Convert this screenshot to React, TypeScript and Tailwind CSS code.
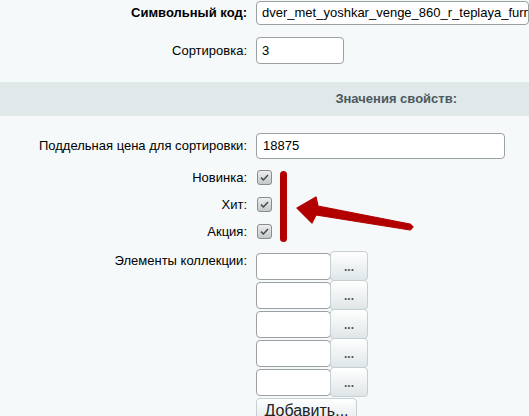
import React from "react";

function Label({ children, bold }: { children: React.ReactNode; bold?: boolean }) {
  return (
    <div className={`w-[247px] shrink-0 text-right ${bold ? "font-bold" : ""}`}>{children}</div>
  );
}

function Check() {
  return (
    <div className="w-[15px] h-[15px] rounded-[3px] border border-[#878c8f] bg-gradient-to-b from-[#eceeef] to-[#c4c8ca] flex items-center justify-center">
      <svg width="11" height="11" viewBox="0 0 11 11">
        <path d="M2 5.6 L4.4 8 L9 3" fill="none" stroke="#454a4d" strokeWidth="1.5" />
      </svg>
    </div>
  );
}

function CheckRow({ label }: { label: string }) {
  return (
    <div className="flex items-center h-[27px]">
      <Label>{label}</Label>
      <div className="ml-[10px]">
        <Check />
      </div>
    </div>
  );
}

function CollRow() {
  return (
    <div className="flex h-[29px]">
      <div className="w-[75px] h-[27px] mt-[2px] bg-white border border-[#9aa0a3] rounded-[4px]" />
      <div className="w-[38px] h-[30px] -ml-px bg-gradient-to-b from-[#ffffff] to-[#dfe6e8] border border-[#c6cfd2] rounded-[4px] flex items-center justify-center text-[#555] font-bold text-[12px] pt-[2px]">
        ...
      </div>
    </div>
  );
}

export default function App() {
  return (
    <div className="w-[529px] h-[416px] bg-[#f5f9f9] relative overflow-hidden font-['Liberation_Sans',Arial,sans-serif] text-[13px] text-black leading-[16px]">
      <div className="flex items-center pt-[1px]">
        <Label bold>Символьный код:</Label>
        <div className="ml-[9px] w-[300px] h-[24px] bg-white border border-[#9aa0a3] rounded-[4px] pl-[5px] flex items-center whitespace-nowrap overflow-hidden">
          dver_met_yoshkar_venge_860_r_teplaya_furn
        </div>
      </div>
      <div className="flex items-center mt-[12px]">
        <Label>Сортировка:</Label>
        <div className="ml-[9px] w-[88px] h-[27px] bg-white border border-[#9aa0a3] rounded-[4px] pl-[5px] flex items-center">
          3
        </div>
      </div>
      <div className="mt-[18px] h-[34px] bg-[#e0e8ea] flex items-center justify-end pr-[72px] font-bold text-[#4b5a60]">
        Значения свойств:
      </div>
      <div className="flex items-center mt-[17px]">
        <Label>Поддельная цена для сортировки:</Label>
        <div className="ml-[9px] w-[249px] h-[26px] bg-white border border-[#9aa0a3] rounded-[4px] pl-[6px] flex items-center">
          18875
        </div>
      </div>
      <div className="mt-[5px]">
        <CheckRow label="Новинка:" />
        <CheckRow label="Хит:" />
        <CheckRow label="Акция:" />
      </div>
      <div className="flex mt-[6px]">
        <Label>
          <div className="pt-[2px]">Элементы коллекции:</div>
        </Label>
        <div className="ml-[9px] flex flex-col">
          <CollRow />
          <CollRow />
          <CollRow />
          <CollRow />
          <CollRow />
          <div className="mt-[2px] w-[101px] h-[28px] bg-gradient-to-b from-[#ffffff] to-[#dfe6e8] border border-[#c6cfd2] rounded-[4px] flex items-start justify-center pt-[2px] text-[#222] text-[16px] leading-[20px]">
            Добавить...
          </div>
        </div>
      </div>
      <svg className="absolute left-0 top-0 pointer-events-none" width="529" height="416" viewBox="0 0 529 416">
        <rect x="280" y="171" width="7" height="71" rx="3.5" fill="#b20000" />
        <polygon
          points="297,208 316,197 318,206 410,224 413,227 410,230 316,215 312,223"
          fill="#b20000"
          stroke="#b20000"
          strokeWidth="1.2"
          strokeLinejoin="round"
        />
      </svg>
    </div>
  );
}
